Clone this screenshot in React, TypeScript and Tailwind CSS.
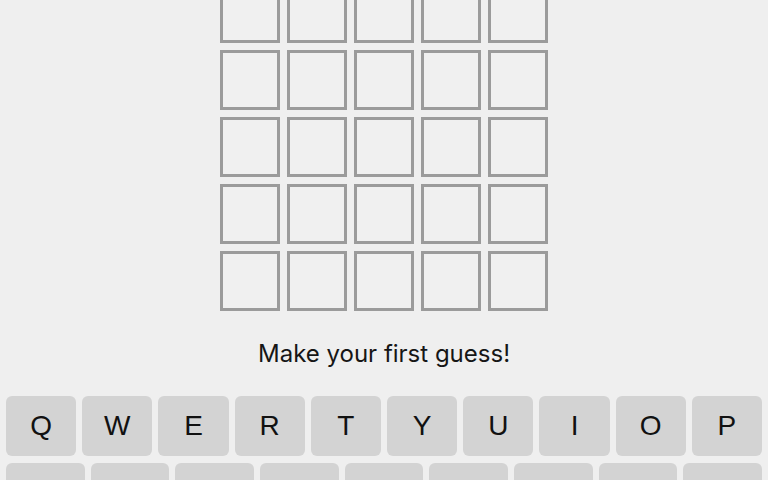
import React from 'react';

const ROWS = 6;
const COLS = 5;

const keyboard = [
  ['Q', 'W', 'E', 'R', 'T', 'Y', 'U', 'I', 'O', 'P'],
  ['A', 'S', 'D', 'F', 'G', 'H', 'J', 'K', 'L'],
  ['ENTER', 'Z', 'X', 'C', 'V', 'B', 'N', 'M', '⌫'],
];

export default function App() {
  return (
    <div
      className="h-[480px] overflow-hidden bg-[#efefef] flex flex-col items-center text-[#111]"
      style={{ fontFamily: '"Liberation Sans", Arial, sans-serif' }}
    >
      {/* Board */}
      <div className="-mt-[84px] flex flex-col gap-[7px] shrink-0">
        {Array.from({ length: ROWS }).map((_, r) => (
          <div key={r} className="flex gap-[7px]">
            {Array.from({ length: COLS }).map((_, c) => (
              <div key={c} className="w-[60px] h-[60px] border-[3px] border-[#9b9b9b] bg-[#f0f0f0]" />
            ))}
          </div>
        ))}
      </div>

      <p className="mt-[29px] text-[24px] leading-[28px] shrink-0 font-['Inter',sans-serif] text-[#161616]">
        Make your first guess!
      </p>

      {/* Keyboard */}
      <div className="mt-[28px] w-full px-1.5 flex flex-col gap-[7px] shrink-0">
        {keyboard.map((row, i) => (
          <div key={i} className="flex gap-1.5">
            {row.map(k => (
              <button
                key={k}
                className="flex-1 h-[60px] rounded-md bg-[#d3d3d3] flex items-center justify-center text-[28px] font-normal text-[#111]"
              >
                {k}
              </button>
            ))}
          </div>
        ))}
      </div>
    </div>
  );
}
